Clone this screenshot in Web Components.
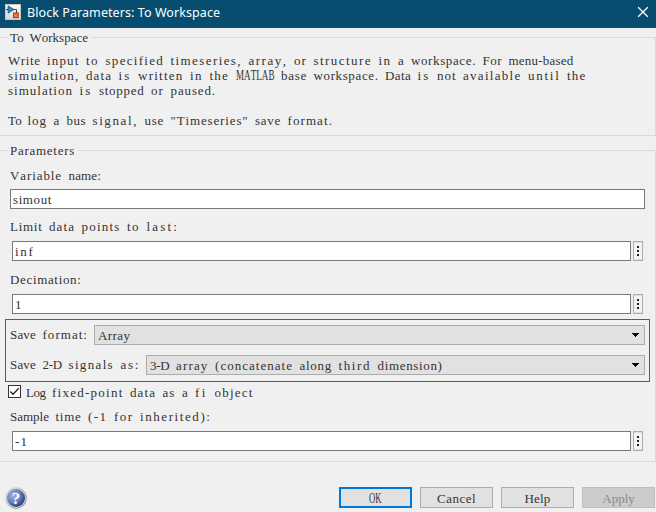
<!DOCTYPE html>
<html lang="en">
<head>
<meta charset="utf-8">
<title>Block Parameters: To Workspace</title>
<style>
html,body{margin:0;height:512px;overflow:hidden;background:#f0f0f0}
</style>
</head>
<body>
<block-dialog></block-dialog>
<script>
const pen = document.createElement('canvas').getContext('2d');
pen.fontKerning = 'none';
const make = (name, html, ready) => customElements.define(name, class extends HTMLElement {
  constructor(){ super(); this.attachShadow({mode:'open'}); }
  connectedCallback(){ this.shadowRoot.innerHTML = html; if (ready) ready.call(this, this.shadowRoot); }
});

/* Text on a half-width character grid: every word takes 6.5px per character.
   Words of wide capitals are condensed, all others are letter-spaced. */
make('grid-text', `<style>
:host{display:block;font:13px/15px "Liberation Serif",serif;font-kerning:none;font-variant-ligatures:none;height:15px;white-space:pre;word-spacing:3.25px;color:var(--ink,#333)}
.tight{display:inline-block;transform-origin:0 12px}
</style><span id="t"></span>`, function(root){
  const out = root.getElementById('t');
  pen.font = '13px "Liberation Serif"';
  this.getAttribute('text').split(/( )/).forEach(w => {
    if (w === ' ') { out.append(' '); return; }
    const s = document.createElement('span');
    const natural = pen.measureText(w).width, target = 6.5 * w.length;
    s.textContent = w;
    if (natural > target + 3) {
      s.className = 'tight';
      s.style.transform = `scale(${(target - .5) / natural}, 1.08)`;
      s.style.marginRight = (target - natural) + 'px';
    } else s.style.letterSpacing = ((target - natural) / w.length) + 'px';
    out.append(s);
  });
});

make('title-bar', `<style>
:host{display:flex;box-sizing:border-box;height:28px;background:#064d6f;padding:0 7px 0 5px;align-items:flex-start}
.logo{margin-top:4px;flex:none}
.cap{margin:4px 0 0 6px;font:12.5px/17px "Noto Sans",sans-serif;color:#fff;white-space:pre;flex:1}
.x{margin-top:6px}
</style>
<svg class="logo" width="16" height="16" viewBox="0 0 16 16"><defs><linearGradient id="g" x2="0" y2="1"><stop stop-color="#fff"/><stop offset="1" stop-color="#d4d4d4"/></linearGradient></defs>
<rect x=".5" y=".5" width="15" height="15" fill="url(#g)" stroke="#cfc6bc"/><path d="M1 5.5h2M8 5.5h3.5V9" fill="none" stroke="#444"/><path d="M3 1.8 9 5.5 3 9.2z" fill="#2a8cc0" stroke="#145a80" stroke-width=".8"/><rect x="8.6" y="9" width="4.6" height="4.6" fill="#f07a45" stroke="#b03315"/></svg>
<span class="cap"><slot></slot></span>
<svg class="x" width="12" height="12" viewBox="0 0 12 12"><path d="M1.2 1.2l9.6 9.6M10.8 1.2l-9.6 9.6" stroke="#fff" stroke-width="1.3"/></svg>`,
function(root){
  pen.font = '12.5px "Noto Sans"';
  const t = this.textContent;
  root.querySelector('.cap').style.letterSpacing = (194.5 - pen.measureText(t).width) / t.length + 'px';
});

make('group-box', `<style>
:host{display:block;box-sizing:border-box;border:1px solid #dadada;border-left:0}
.legend{display:block;width:max-content;height:15px;margin:-8px 0 0 7px;padding:0 3px;background:#f0f0f0}
</style><span class="legend"><slot name="legend"></slot></span><slot></slot>`);

make('text-field', `<style>
:host{display:flex;height:20px;gap:2px}
.in{box-sizing:border-box;flex:1;border:1px solid #7a7a7a;background:#fff;padding:2px 0 0 2px}
.more{display:none}
:host([more]) .more{display:flex;box-sizing:border-box;width:10px;border:1px solid #adadad;background:#f4f4f4;box-shadow:inset 0 1px #ddd,inset 0 -1px #ddd;flex-direction:column;align-items:center;padding-top:4px;gap:2px}
i{width:2px;height:2px;background:#222}
</style><div class="in"><slot></slot></div><div class="more"><i></i><i></i><i></i></div>`);

make('drop-down', `<style>
:host{display:flex;flex:1;box-sizing:border-box;height:20px;border:1px solid #adadad;background:#e1e1e1;padding:2px 5px 0 3px;justify-content:space-between}
svg{margin-top:5px}
</style><slot></slot><svg width="7" height="4" viewBox="0 0 7 4" shape-rendering="crispEdges"><path d="M0 0h7v1H0zM1 1h5v1H1zM2 2h3v1H2zM3 3h1v1H3z"/></svg>`);

make('check-box', `<style>
:host{display:flex;gap:5px}
svg{flex:none}
</style><svg width="13" height="13" viewBox="0 0 13 13"><rect x=".5" y=".5" width="12" height="12" fill="#fff" stroke="#333"/><path d="M2.3 6.5 5 9.2 10.7 3.3" fill="none" stroke="#222" stroke-width="1.3"/></svg><slot></slot>`);

make('push-button', `<style>
:host{display:flex;box-sizing:border-box;width:73px;height:21px;border:1px solid #adadad;background:#e1e1e1;justify-content:center;padding-top:3px}
:host([primary]){border:2px solid #0078d7;padding-top:2px}
:host([disabled]){background:#ccc;border-color:#bfbfbf;--ink:#8b8b8b}
</style><slot></slot>`);

make('help-icon', `<style>:host{display:block;width:22px;height:22px}
svg{display:block}text{font:bold 17px "Liberation Serif",serif}</style>
<svg width="22" height="22" viewBox="0 0 22 22"><defs><radialGradient id="b" cx=".35" cy=".35" r=".7"><stop stop-color="#a4b4dc"/><stop offset=".55" stop-color="#6882bd"/><stop offset="1" stop-color="#263f7d"/></radialGradient><linearGradient id="r" x2="1" y2="1"><stop stop-color="#e5e5e5"/><stop offset="1" stop-color="#747474"/></linearGradient></defs>
<circle cx="11" cy="11" r="10.7" fill="url(#r)"/><circle cx="11" cy="11" r="9.9" fill="#d5d8df"/><circle cx="11" cy="11" r="9" fill="url(#b)"/><text x="11" y="16.7" text-anchor="middle" fill="#fff">?</text></svg>`);

make('block-dialog', `<style>
:host{display:flex;flex-direction:column;width:656px;height:512px;background:#f0f0f0}
.about{margin-top:9px;height:99px}
.desc{padding:8px 0 0 8px}
.gap{height:15px}
.params{margin-top:14px;height:312px}
.form{display:flex;flex-direction:column}
.lab{margin-left:10px}
.row{display:flex;height:20px}
.marked{box-sizing:border-box;margin:5px 5px 0 5px;height:63px;border:1px solid #e81f27;padding:5px 4px 0 4px;display:grid;gap:10px;align-content:start}
.row grid-text.n{margin:2px 6px 0 0}
.wide{margin:0 10px}
.more{margin:0 12px}
check-box{margin:3px 0 0 8px}
.foot{display:flex;margin-top:25px;padding:0 1px 0 5px;gap:8px}
.foot help-icon{margin-right:auto}
</style>
<title-bar>Block Parameters: To Workspace</title-bar>
<group-box class="about"><grid-text slot="legend" text="To Workspace"></grid-text>
<div class="desc">
<grid-text text="Write input to specified timeseries, array, or structure in a workspace. For menu-based"></grid-text>
<grid-text text="simulation, data is written in the MATLAB base workspace. Data is not available until the"></grid-text>
<grid-text text="simulation is stopped or paused."></grid-text>
<div class="gap"></div>
<grid-text text='To log a bus signal, use "Timeseries" save format.'></grid-text>
</div></group-box>
<group-box class="params"><grid-text slot="legend" text="Parameters"></grid-text>
<div class="form">
<grid-text class="lab" style="margin-top:10px" text="Variable name:"></grid-text>
<text-field class="wide" style="margin-top:6px"><grid-text text="simout"></grid-text></text-field>
<grid-text class="lab" style="margin-top:10px" text="Limit data points to last:"></grid-text>
<text-field more class="more" style="margin-top:7px"><grid-text text="inf"></grid-text></text-field>
<grid-text class="lab" style="margin-top:11px" text="Decimation:"></grid-text>
<text-field more class="more" style="margin-top:7px"><grid-text text="1"></grid-text></text-field>
<div class="marked">
<div class="row"><grid-text class="n" text="Save format:"></grid-text><drop-down><grid-text text="Array"></grid-text></drop-down></div>
<div class="row"><grid-text class="n" text="Save 2-D signals as:"></grid-text><drop-down><grid-text text="3-D array (concatenate along third dimension)"></grid-text></drop-down></div>
</div>
<check-box><grid-text text="Log fixed-point data as a fi object"></grid-text></check-box>
<grid-text class="lab" style="margin-top:9px" text="Sample time (-1 for inherited):"></grid-text>
<text-field more class="more" style="margin-top:7px"><grid-text text="-1"></grid-text></text-field>
</div></group-box>
<div class="foot"><help-icon></help-icon>
<push-button primary><grid-text text="OK"></grid-text></push-button>
<push-button><grid-text text="Cancel"></grid-text></push-button>
<push-button><grid-text text="Help"></grid-text></push-button>
<push-button disabled><grid-text text="Apply"></grid-text></push-button>
</div>`);
</script>
</body>
</html>
